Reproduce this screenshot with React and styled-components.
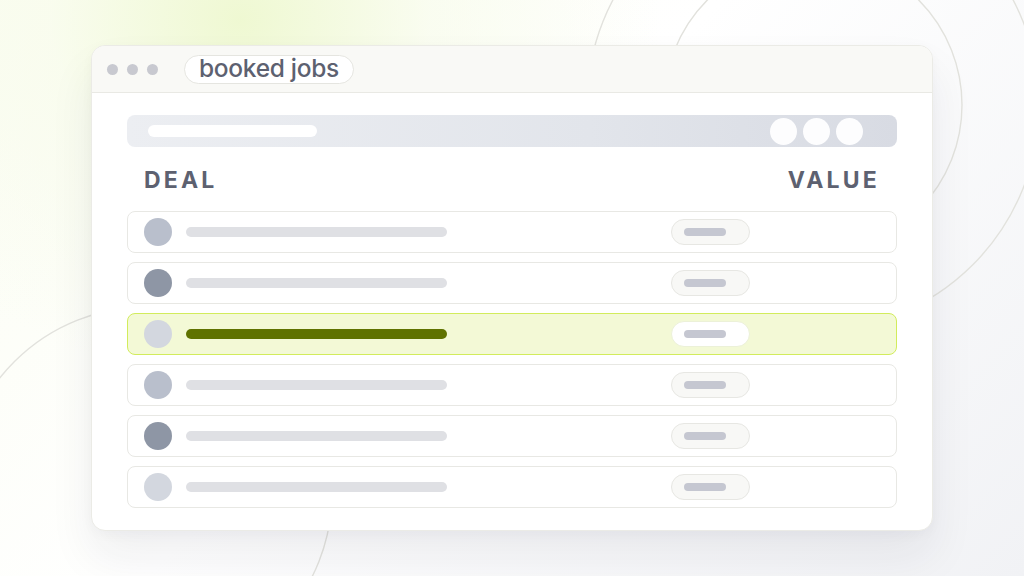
import React from "react";
import styled, { createGlobalStyle } from "styled-components";

const GlobalStyle = createGlobalStyle`
  * { box-sizing: border-box; }
  html, body { margin: 0; padding: 0; }
  body {
    font-family: Inter, "Noto Sans", sans-serif;
    background: #ffffff;
  }
`;

const rows = [
  { avatar: "#b9bfcc" },
  { avatar: "#8e96a5" },
  { avatar: "#d3d7df", active: true },
  { avatar: "#b9bfcc" },
  { avatar: "#8e96a5" },
  { avatar: "#d3d7df" },
];

const App = () => {
  return (
    <>
      <GlobalStyle />
      <Stage>
        <Rings viewBox="0 0 1024 576" preserveAspectRatio="none">
          <circle cx="813" cy="105" r="149" />
          <circle cx="813" cy="105" r="226" />
          <circle cx="146" cy="493" r="186" />
        </Rings>
        <Window>
          <TitleBar>
            <Dots>
              <Dot />
              <Dot />
              <Dot />
            </Dots>
            <Tab>booked jobs</Tab>
          </TitleBar>
          <Content>
            <SearchBar>
              <SearchField />
              <Actions>
                <ActionDot />
                <ActionDot />
                <ActionDot />
              </Actions>
            </SearchBar>
            <Header>
              <HeaderLabel>DEAL</HeaderLabel>
              <HeaderLabel>VALUE</HeaderLabel>
            </Header>
            <List>
              {rows.map((r, i) => (
                <Row key={i} $active={r.active}>
                  <Avatar $color={r.avatar} />
                  <NameLine $active={r.active} />
                  <ValuePill $active={r.active}>
                    <ValueLine />
                  </ValuePill>
                </Row>
              ))}
            </List>
          </Content>
        </Window>
      </Stage>
    </>
  );
};

const Stage = styled.div`
  position: relative;
  width: 100%;
  height: 100vh;
  overflow: hidden;
  display: flex;
  align-items: center;
  justify-content: center;
  background:
    radial-gradient(ellipse 420px 360px at 240px 20px, rgba(238, 248, 208, 0.95) 0%, rgba(248, 252, 236, 0.7) 45%, rgba(255, 255, 255, 0) 100%),
    linear-gradient(135deg, #fbfdf2 0%, #ffffff 45%, #f1f2f5 100%);
`;

const Rings = styled.svg`
  position: absolute;
  inset: 0;
  width: 100%;
  height: 100%;
  fill: none;
  stroke: #e2e2dd;
  stroke-width: 1.4;
`;

const Window = styled.div`
  position: relative;
  width: 842px;
  height: 486px;
  background: #ffffff;
  border: 1px solid #ebebe6;
  border-radius: 14px;
  overflow: hidden;
  box-shadow: 0 26px 46px rgba(30, 30, 50, 0.07), 0 4px 12px rgba(30, 30, 50, 0.03);
  display: flex;
  flex-direction: column;
`;

const TitleBar = styled.div`
  height: 47px;
  flex-shrink: 0;
  background: #f9f9f6;
  border-bottom: 1px solid #e9e9e4;
  display: flex;
  align-items: center;
  padding-left: 15px;
  gap: 26px;
`;

const Dots = styled.div`
  display: flex;
  gap: 9px;
`;

const Dot = styled.span`
  width: 11px;
  height: 11px;
  border-radius: 50%;
  background: #c8c9d0;
`;

const Tab = styled.div`
  height: 29px;
  padding: 0 14px 2px;
  display: flex;
  align-items: center;
  background: #ffffff;
  border: 1px solid #e5e5e0;
  border-radius: 15px;
  font-size: 24.5px;
  font-weight: 500;
  color: #5d6170;
  letter-spacing: -0.3px;
  line-height: 1;
`;

const Content = styled.div`
  padding: 22px 35px 0;
  display: flex;
  flex-direction: column;
`;

const SearchBar = styled.div`
  height: 32px;
  border-radius: 8px;
  background: linear-gradient(90deg, #eceef2 0%, #e2e5eb 60%, #d8dbe3 100%);
  display: flex;
  align-items: center;
  justify-content: space-between;
  padding: 0 34px 0 21px;
`;

const SearchField = styled.div`
  width: 169px;
  height: 12px;
  border-radius: 6px;
  background: #ffffff;
`;

const Actions = styled.div`
  display: flex;
  gap: 6px;
`;

const ActionDot = styled.span`
  width: 27px;
  height: 27px;
  border-radius: 50%;
  background: #fdfdfe;
`;

const Header = styled.div`
  height: 64px;
  display: flex;
  align-items: center;
  justify-content: space-between;
  padding: 3px 17px 0 17px;
`;

const HeaderLabel = styled.span`
  font-size: 23px;
  font-weight: 700;
  letter-spacing: 3.2px;
  color: #5d6170;
  line-height: 1;
`;

const List = styled.div`
  display: flex;
  flex-direction: column;
  gap: 9px;
`;

const Row = styled.div`
  height: 42px;
  display: flex;
  align-items: center;
  padding-left: 16px;
  border-radius: 8px;
  border: ${(p) => (p.$active ? "1.5px solid #d2ec5c" : "1px solid #e8e8e4")};
  background: ${(p) => (p.$active ? "#f3f9d6" : "#ffffff")};
`;

const Avatar = styled.span`
  width: 28px;
  height: 28px;
  border-radius: 50%;
  background: ${(p) => p.$color};
  flex-shrink: 0;
`;

const NameLine = styled.span`
  margin-left: 14px;
  width: 261px;
  height: 10px;
  border-radius: 5px;
  background: ${(p) => (p.$active ? "#5f7200" : "#dfe0e4")};
`;

const ValuePill = styled.div`
  margin-left: 224px;
  width: 79px;
  height: 26px;
  border-radius: 13px;
  border: 1px solid ${(p) => (p.$active ? "#ecf1d8" : "#e7e7e3")};
  background: ${(p) => (p.$active ? "#ffffff" : "#f8f8f6")};
  display: flex;
  align-items: center;
  padding-left: 12px;
`;

const ValueLine = styled.span`
  width: 42px;
  height: 8px;
  border-radius: 4px;
  background: #c5c7d1;
`;

export default App;
